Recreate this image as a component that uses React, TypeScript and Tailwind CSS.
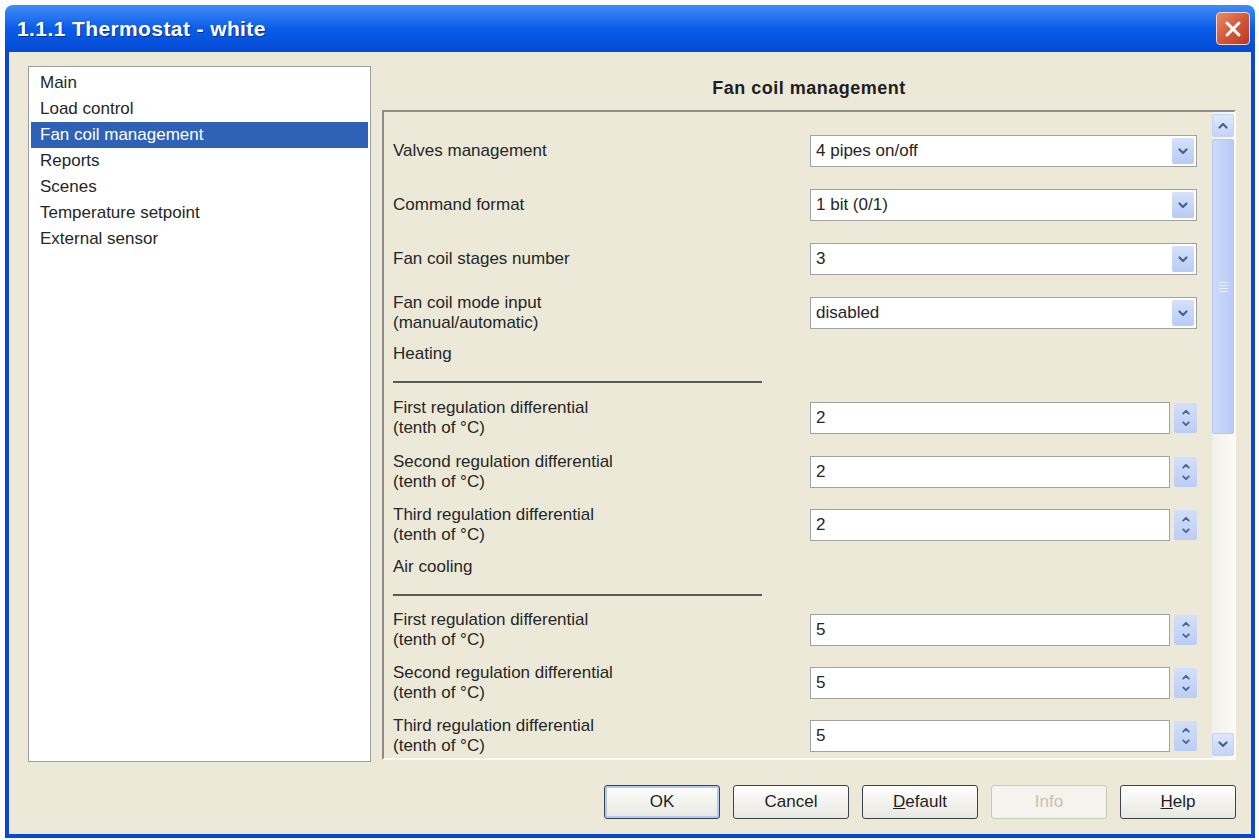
import type { ReactNode } from 'react';

const sections = [
  'Main',
  'Load control',
  'Fan coil management',
  'Reports',
  'Scenes',
  'Temperature setpoint',
  'External sensor',
];

const ChevronDown = ({ className = '' }: { className?: string }) => (
  <svg viewBox="0 0 10 7" className={className} fill="none" stroke="currentColor" strokeWidth={2.2} strokeLinecap="round" strokeLinejoin="round">
    <path d="M1.5 1.5 5 5 8.5 1.5" />
  </svg>
);

const ChevronUp = ({ className = '' }: { className?: string }) => (
  <svg viewBox="0 0 10 7" className={className} fill="none" stroke="currentColor" strokeWidth={2.2} strokeLinecap="round" strokeLinejoin="round">
    <path d="M1.5 5.5 5 2 8.5 5.5" />
  </svg>
);

const Label = ({ lines }: { lines: string[] }) => (
  <div className="w-[417px] shrink-0 text-[17px] leading-[20px] text-[#262626]">
    {lines.map((l) => (
      <div key={l}>{l}</div>
    ))}
  </div>
);

const Select = ({ value }: { value: string }) => (
  <div className="flex h-[32px] w-[387px] items-center border border-[#a2a2a2] bg-white pl-[5px] pr-[2px]">
    <span className="flex-1 text-[17px] text-[#262626]">{value}</span>
    <div className="flex h-[26px] w-[22px] items-center justify-center rounded-[2px] bg-gradient-to-b from-[#d6e1fb] to-[#b9cbf5] text-[#4b6190]">
      <ChevronDown className="h-[7px] w-[10px]" />
    </div>
  </div>
);

const Spin = ({ value }: { value: string }) => (
  <div className="flex items-center gap-[4px]">
    <div className="flex h-[32px] w-[360px] items-center border border-[#a2a2a2] bg-white pl-[5px] text-[17px] text-[#262626]">
      {value}
    </div>
    <div className="flex h-[30px] w-[23px] flex-col rounded-[2px] bg-gradient-to-b from-[#d3dffa] to-[#bccdf5] py-[3px] text-[#4b6190]">
      <div className="flex flex-1 items-center justify-center">
        <ChevronUp className="h-[6px] w-[8px]" />
      </div>
      <div className="flex flex-1 items-center justify-center">
        <ChevronDown className="h-[6px] w-[8px]" />
      </div>
    </div>
  </div>
);

const Row = ({ lines, children, className = '' }: { lines: string[]; children: ReactNode; className?: string }) => (
  <div className={`flex items-center ${className}`}>
    <Label lines={lines} />
    {children}
  </div>
);

const Heading = ({ text, className = '' }: { text: string; className?: string }) => (
  <div className={className}>
    <div className="text-[17px] leading-[20px] text-[#262626]">{text}</div>
    <div className="mt-[17px] h-[2px] w-[369px] bg-[#5a5a55]" />
  </div>
);

const tenth = (order: string) => [`${order} regulation differential`, '(tenth of °C)'];

const Button = ({ children, primary = false, disabled = false }: { children: ReactNode; primary?: boolean; disabled?: boolean }) => (
  <div
    className={`flex h-[34px] w-[116px] items-center justify-center rounded-[3px] border text-[17px] ${
      disabled
        ? 'border-[#cac8bb] bg-[#f4f3ee] text-[#c5c2b2]'
        : 'border-[#3b4250] bg-gradient-to-b from-white to-[#e8e7e0] text-[#1f1f1f]'
    } ${primary ? 'shadow-[inset_0_0_0_2px_#b3cbf2]' : ''}`}
  >
    {children}
  </div>
);

const ScrollArrow = ({ up = false }: { up?: boolean }) => (
  <div className="flex h-[23px] items-center justify-center rounded-[2px] border border-[#c5d4f4] bg-gradient-to-b from-[#dfe8fc] to-[#c3d3f8] text-[#4b6190]">
    {up ? <ChevronUp className="h-[7px] w-[10px]" /> : <ChevronDown className="h-[7px] w-[10px]" />}
  </div>
);

export default function App() {
  return (
    <div className="h-[840px] w-[1259px] bg-white pl-[5px] pr-[4px] pt-[5px] font-['Liberation_Sans',Arial,sans-serif]">
      <div className="flex h-[833px] flex-col">
        {/* title bar */}
        <div className="flex h-[47px] items-center justify-between rounded-t-[8px] bg-gradient-to-b from-[#3f8cf8] via-[#0a5ce8] to-[#044ad3] pl-[12px] pr-[5px]">
          <span className="text-[21px] font-bold tracking-[0.4px] text-white [text-shadow:1px_1px_0_#0b2f8f]">1.1.1 Thermostat - white</span>
          <div className="flex h-[33px] w-[34px] items-center justify-center rounded-[4px] border border-[#f2d6cc] bg-gradient-to-br from-[#e88a68] via-[#d4583a] to-[#b73a21]">
            <svg viewBox="0 0 20 20" className="h-[20px] w-[20px]" stroke="white" strokeWidth={3} strokeLinecap="round">
              <path d="M4 4 16 16M16 4 4 16" />
            </svg>
          </div>
        </div>

        {/* dialog body */}
        <div className="flex flex-1 flex-col border-x-4 border-b-4 border-[#0a48d4] bg-[#ece9d8] pb-[15px] pl-[19px] pr-[15px] pt-[14px]">
          <div className="flex h-[696px] gap-[11px]">
            <div className="h-full w-[343px] border border-[#9e9e9a] bg-white px-[2px] pt-[3px]">
              {sections.map((s) => (
                <div
                  key={s}
                  className={`flex h-[26px] items-center pl-[9px] text-[17px] ${
                    s === 'Fan coil management' ? 'bg-[#2f61b6] text-white' : 'text-[#262626]'
                  }`}
                >
                  {s}
                </div>
              ))}
            </div>

            <div className="flex w-[854px] flex-col">
              <div className="flex h-[44px] items-center justify-center text-[18px] font-bold tracking-[0.5px] text-[#1e1e1e]">
                Fan coil management
              </div>
              <div className="flex h-[650px] border-2 border-b-[#fbfaf5] border-l-[#8e8c84] border-r-[#fbfaf5] border-t-[#8e8c84]">
                <div className="flex flex-1 flex-col overflow-hidden pl-[9px] pt-[23px]">
                  <Row lines={['Valves management']}>
                    <Select value="4 pipes on/off" />
                  </Row>
                  <Row lines={['Command format']} className="mt-[22px]">
                    <Select value="1 bit (0/1)" />
                  </Row>
                  <Row lines={['Fan coil stages number']} className="mt-[22px]">
                    <Select value="3" />
                  </Row>
                  <Row lines={['Fan coil mode input', '(manual/automatic)']} className="mt-[18px]">
                    <Select value="disabled" />
                  </Row>

                  <Heading text="Heating" className="mt-[11px]" />
                  <Row lines={tenth('First')} className="mt-[15px]">
                    <Spin value="2" />
                  </Row>
                  <Row lines={tenth('Second')} className="mt-[14px]">
                    <Spin value="2" />
                  </Row>
                  <Row lines={tenth('Third')} className="mt-[13px]">
                    <Spin value="2" />
                  </Row>

                  <Heading text="Air cooling" className="mt-[12px]" />
                  <Row lines={tenth('First')} className="mt-[14px]">
                    <Spin value="5" />
                  </Row>
                  <Row lines={tenth('Second')} className="mt-[13px]">
                    <Spin value="5" />
                  </Row>
                  <Row lines={tenth('Third')} className="mt-[13px]">
                    <Spin value="5" />
                  </Row>
                </div>

                {/* vertical scrollbar */}
                <div className="flex w-[22px] flex-col bg-gradient-to-r from-[#f1f0ea] to-[#fbfaf6] py-[2px]">
                  <ScrollArrow up />
                  <div className="mt-[2px] flex h-[295px] flex-col items-center justify-center gap-[2px] rounded-[2px] border border-[#b3c6f1] bg-gradient-to-r from-[#cddbfb] to-[#b8cbf6]">
                    <div className="h-px w-[9px] bg-[#e8eefc]" />
                    <div className="h-px w-[9px] bg-[#e8eefc]" />
                    <div className="h-px w-[9px] bg-[#e8eefc]" />
                    <div className="h-px w-[9px] bg-[#e8eefc]" />
                  </div>
                  <div className="flex-1" />
                  <ScrollArrow />
                </div>
              </div>
            </div>
          </div>

          <div className="mt-[23px] flex justify-end gap-[13px]">
            <Button primary>OK</Button>
            <Button>Cancel</Button>
            <Button>
              <span className="underline">D</span>efault
            </Button>
            <Button disabled>Info</Button>
            <Button>
              <span className="underline">H</span>elp
            </Button>
          </div>
        </div>
      </div>
    </div>
  );
}
